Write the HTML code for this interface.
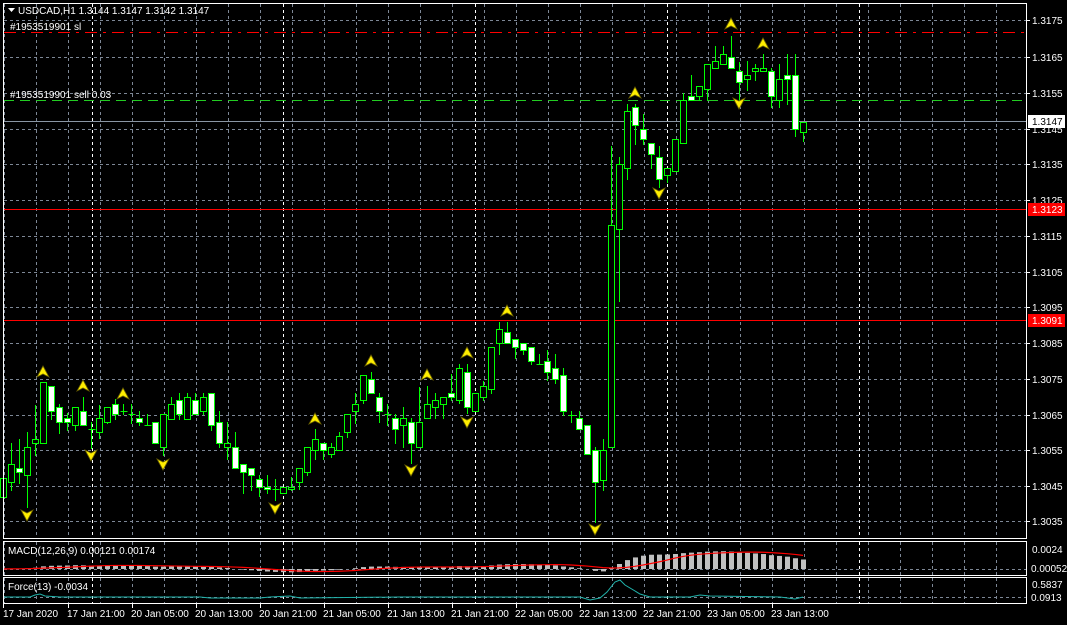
<!DOCTYPE html>
<html><head><meta charset="utf-8"><style>
html,body{margin:0;padding:0;background:#000;width:1067px;height:625px;overflow:hidden}
svg{display:block}
text{font-family:"Liberation Sans",sans-serif;font-size:10px;fill:#fff}
</style></head><body>
<svg id="s" width="1067" height="625" xmlns="http://www.w3.org/2000/svg">
<rect width="1067" height="625" fill="#000"/>
<g id="grid"></g>
<g id="lines"></g>
<g id="cand"></g>
<g id="arr"></g>
<g id="ind"></g>
<g id="frame" fill="none" stroke="#fff" stroke-width="1">
<rect x="3.5" y="3.5" width="1023" height="535"/>
<rect x="3.5" y="541.5" width="1023" height="34"/>
<rect x="3.5" y="577.5" width="1023" height="26"/>
</g>
<g id="txt">
<polygon points="8,8 15,8 11.5,12" fill="#fff"/>
<text x="18" y="14">USDCAD,H1  1.3144 1.3147 1.3142 1.3147</text>
<text x="10" y="30">#1953519901 sl</text>
<text x="10" y="98">#1953519901 sell 0.03</text>
<text x="8" y="554">MACD(12,26,9) 0.00121 0.00174</text>
<text x="8" y="590">Force(13) -0.0034</text>
</g>
<g id="axis"></g>
</svg>
<script>
const NS="http://www.w3.org/2000/svg";
function el(p,t,a,txt){const e=document.createElementNS(NS,t);for(const k in a)e.setAttribute(k,a[k]);if(txt!==undefined)e.textContent=txt;document.getElementById(p).appendChild(e);return e;}
const G="#7d8796";
const prices=[["1.3175",20],["1.3165",57],["1.3155",93],["1.3145",129],["1.3135",164],["1.3125",200],["1.3115",236],["1.3105",272],["1.3095",307],["1.3085",343],["1.3075",379],["1.3065",415],["1.3055",450],["1.3045",486],["1.3035",521]];
prices.forEach(p=>{el("grid","line",{x1:4,x2:1026,y1:p[1]+.5,y2:p[1]+.5,stroke:G,"stroke-dasharray":"3,3"});el("axis","text",{x:1032,y:p[1]+4},p[0]);el("axis","line",{x1:1027,x2:1030,y1:p[1]+.5,y2:p[1]+.5,stroke:"#fff"});});
for(let x=4;x<1026;x+=32){[[4,538],[542,575],[578,603]].forEach(r=>el("grid","line",{x1:x+.5,x2:x+.5,y1:r[0],y2:r[1],stroke:G,"stroke-dasharray":"3,3"}));}
[92,283,475,667,859].forEach(x=>{[[4,538],[542,575],[578,603]].forEach(r=>el("grid","line",{x1:x+.5,x2:x+.5,y1:r[0],y2:r[1],stroke:"#fff","stroke-dasharray":"3,3"}));});
el("grid","line",{x1:4,x2:1026,y1:569.5,y2:569.5,stroke:G,"stroke-dasharray":"3,3"});
el("grid","line",{x1:4,x2:1026,y1:597.5,y2:597.5,stroke:G,"stroke-dasharray":"3,3"});
el("lines","line",{x1:4,x2:1026,y1:32.5,y2:32.5,stroke:"#ff0000","stroke-dasharray":"12,6,3,6"});
el("lines","line",{x1:4,x2:1026,y1:100.5,y2:100.5,stroke:"#22cc22","stroke-dasharray":"10,6"});
el("lines","line",{x1:4,x2:1026,y1:121.5,y2:121.5,stroke:"#8a96a4"});
el("lines","line",{x1:4,x2:1026,y1:209.5,y2:209.5,stroke:"#ff0000"});
el("lines","line",{x1:4,x2:1026,y1:320.5,y2:320.5,stroke:"#ff0000"});
el("axis","rect",{x:1028,y:115,width:37,height:13,fill:"#fff"});
el("axis","text",{x:1032,y:125,style:"fill:#000"},"1.3147");
el("axis","rect",{x:1028,y:203,width:37,height:13,fill:"#ff0000"});
el("axis","text",{x:1032,y:213},"1.3123");
el("axis","rect",{x:1028,y:314,width:37,height:13,fill:"#ff0000"});
el("axis","text",{x:1032,y:324},"1.3091");
el("axis","text",{x:1032,y:553},"0.0024");
el("axis","text",{x:1031,y:572},"0.00052");
el("axis","text",{x:1032,y:588},"0.5837");
el("axis","text",{x:1031,y:601},"0.0913");
const tl=["17 Jan 2020","17 Jan 21:00","20 Jan 05:00","20 Jan 13:00","20 Jan 21:00","21 Jan 05:00","21 Jan 13:00","21 Jan 21:00","22 Jan 05:00","22 Jan 13:00","22 Jan 21:00","23 Jan 05:00","23 Jan 13:00"];
tl.forEach((t,i)=>{const x=i==0?3:4+64*i;el("axis","line",{x1:x+.5,x2:x+.5,y1:604,y2:608,stroke:"#fff"});el("axis","text",{x:i==0?3:x-1,y:617},t);});
const C=[[0,468,505,478,497,1],[1,443,490,464,482,1],[2,439,483,468,472,0],[3,432,507,447,475,1],[4,405,455,439,443,1],[5,382,443,382,443,1],[6,386,419,386,411,0],[7,404,433,407,422,0],[8,413,430,418,422,0],[9,407,430,407,425,1],[10,397,425,411,425,0],[11,422,448,429,429,1],[12,405,438,418,432,1],[13,407,423,407,422,1],[14,399,419,404,414,0],[15,404,414,411,411,1],[16,404,423,414,414,1],[17,411,425,418,422,0],[18,414,425,425,425,1],[19,422,443,422,443,0],[20,414,455,414,447,1],[21,397,419,404,419,1],[22,393,419,400,414,0],[23,393,419,397,419,1],[24,393,414,400,414,0],[25,393,414,397,411,1],[26,393,430,393,425,0],[27,411,447,422,443,0],[28,422,459,443,447,1],[29,432,468,447,468,0],[30,464,493,464,472,0],[31,468,490,468,475,0],[32,475,496,479,487,0],[33,475,493,487,489,0],[34,479,500,489,489,1],[35,487,493,487,493,1],[36,477,490,487,489,1],[37,468,489,468,482,1],[38,447,475,447,472,1],[39,429,459,439,450,1],[40,443,459,443,450,0],[41,443,457,447,454,1],[42,432,450,436,450,1],[43,414,437,414,432,1],[44,393,423,404,411,1],[45,375,403,375,400,1],[46,372,393,379,393,0],[47,393,422,397,411,0],[48,404,425,414,414,1],[49,414,443,418,429,0],[50,407,447,418,425,1],[51,418,463,422,443,0],[52,387,447,422,447,1],[53,386,418,404,418,1],[54,393,418,400,407,1],[55,397,418,397,404,1],[56,374,400,393,397,0],[57,364,403,368,400,1],[58,364,413,372,407,0],[59,393,411,393,411,1],[60,381,400,386,397,1],[61,347,393,347,389,1],[62,322,354,329,343,1],[63,322,343,332,343,0],[64,339,358,339,347,0],[65,343,354,343,350,0],[66,347,364,347,361,0],[67,354,364,364,364,1],[68,350,380,361,372,0],[69,354,383,368,379,0],[70,368,415,375,411,0],[71,411,422,415,415,1],[72,411,429,418,429,0],[73,425,454,425,454,0],[74,447,522,450,482,0],[75,439,490,450,480,1],[76,146,447,225,447,1],[77,157,301,164,229,1],[78,104,179,111,168,1],[79,104,144,107,125,0],[80,114,144,129,139,0],[81,143,168,143,154,0],[82,146,187,157,179,0],[83,168,182,168,175,1],[84,139,171,139,171,1],[85,93,143,100,143,1],[86,75,100,96,100,0],[87,86,100,86,96,1],[88,64,100,64,89,1],[89,46,68,61,68,1],[90,46,64,54,64,1],[91,36,68,57,68,0],[92,62,102,71,82,0],[93,61,90,75,79,1],[94,64,80,68,71,1],[95,54,71,68,71,1],[96,68,107,71,96,0],[97,64,107,79,100,1],[98,54,104,75,79,0],[99,54,136,75,129,0],[100,122,141,122,132,1]];
C.forEach(c=>{const x=3+8*c[0]+.5;el("cand","line",{x1:x,x2:x,y1:c[1],y2:c[2]+1,stroke:"#00ff00"});
 if(c[4]-c[3]<1){el("cand","line",{x1:x-3,x2:x+4,y1:c[3]+.5,y2:c[3]+.5,stroke:"#00ff00"});}
 else el("cand","rect",{x:x-3,y:c[3]+.5,width:6,height:c[4]-c[3],fill:c[5]?"#000":"#fff",stroke:"#00ff00"});});
const up=[[43,372],[83,386],[123,394],[315,419],[371,361],[427,375],[467,353],[507,311],[635,93],[731,24],[763,44]];
const dn=[[27,515],[91,455],[163,464],[275,508],[411,470],[467,422],[595,529],[659,193],[739,103]];
up.forEach(a=>{const x=a[0],y=a[1];el("arr","polygon",{points:`${x},${y-6} ${x+6},${y+5} ${x},${y+2} ${x-6},${y+5}`,fill:"#ffee00",stroke:"#6b6100","stroke-width":".8"});});
dn.forEach(a=>{const x=a[0],y=a[1];el("arr","polygon",{points:`${x-6},${y-5} ${x},${y-2} ${x+6},${y-5} ${x},${y+6}`,fill:"#ffee00",stroke:"#6b6100","stroke-width":".8"});});
const cl=C.map(c=>c[5]?c[3]:c[4]);
function ema(a,n){const k=2/(n+1);let r=[],p=a[0];a.forEach((v,i)=>{p=i?v*k+p*(1-k):v;r.push(p);});return r;}
const e12=ema(cl,12),e26=ema(cl,26);const m=cl.map((v,i)=>-(e12[i]-e26[i])*0.22);
const sig=m.map((v,i)=>{let s=0,n=0;for(let j=Math.max(0,i-8);j<=i;j++){s+=m[j];n++;}return s/n;});
m.forEach((v,i)=>{const x=3+8*i;const h=Math.max(-5,Math.min(25,v));if(Math.abs(h)<.5)return;el("ind","rect",{x:x-2,y:h>0?569-h:569,width:5,height:Math.abs(h),fill:"#c0c0c0"});});
el("ind","polyline",{points:sig.map((v,i)=>`${3+8*i},${569-Math.max(-5,Math.min(25,v))}`).join(" "),fill:"none",stroke:"#ff0000","stroke-width":"1.2"});
const fp="4,597 30,597 35,595 40,594 45,596 60,597 200,597 210,598 260,598 270,597 290,596 300,598 400,597 580,597 590,600 600,598 607,592 615,582 620,580 625,585 640,594 650,597 690,597 700,595 710,596 780,597 795,599 803,597";
el("ind","polyline",{points:fp,fill:"none",stroke:"#20b2aa","stroke-width":"1"});
</script>
</body></html>
